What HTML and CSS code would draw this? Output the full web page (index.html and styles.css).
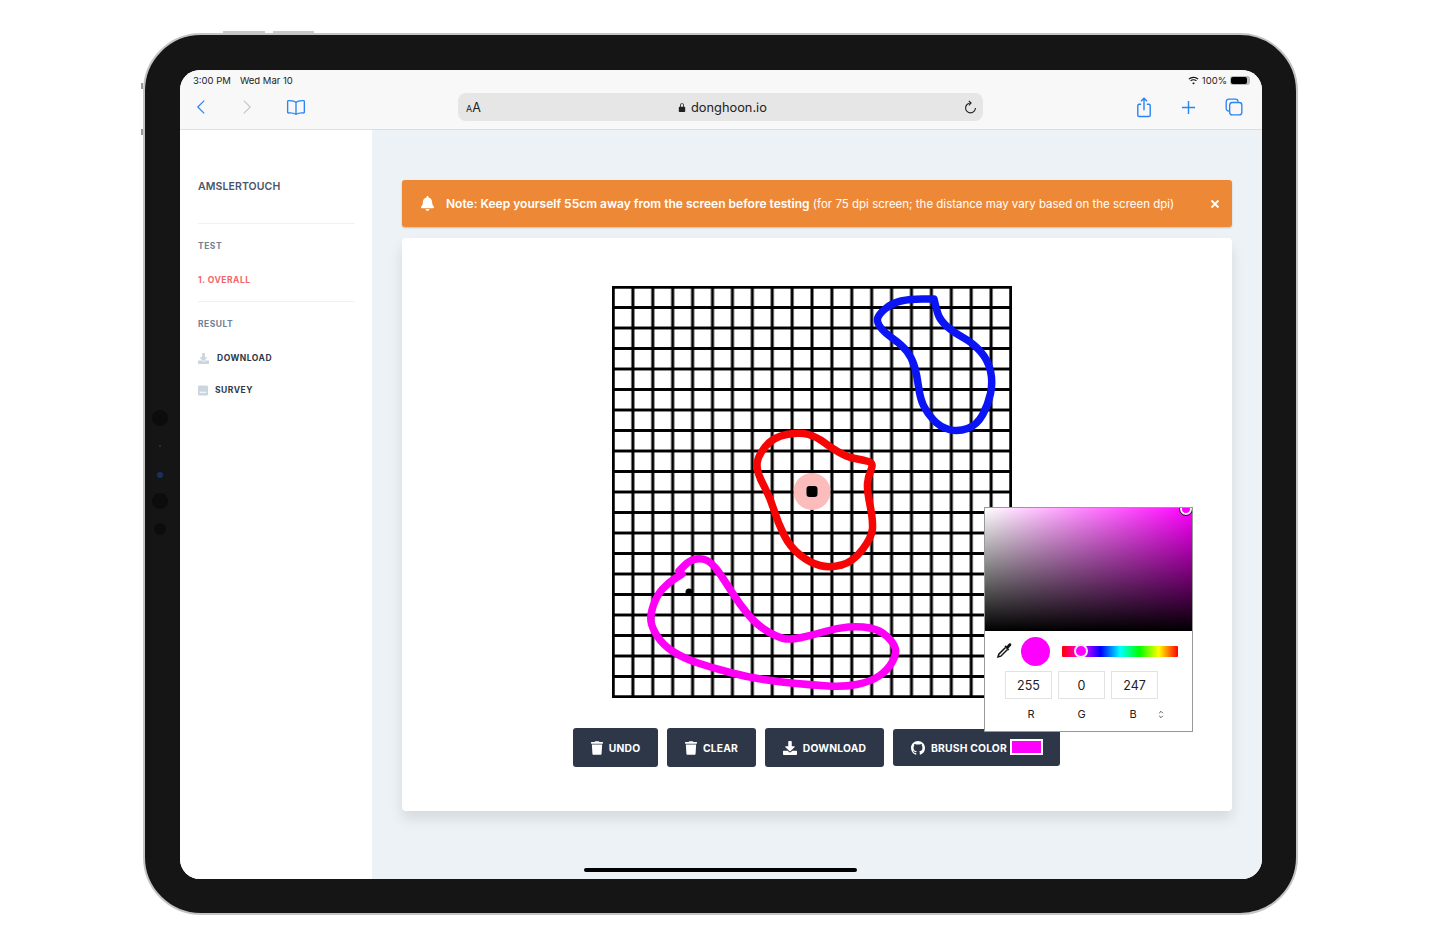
FILE: index.html
```html
<!DOCTYPE html>
<html lang="en">
<head>
    <meta charset="UTF-8">
    <meta name="viewport" content="width=device-width, initial-scale=1.0">
    <title>AmslerTouch</title>
    <link rel="stylesheet" href="styles.css">
</head>
<body>
    <div class="device">
        <span class="top-btn top-btn-a"></span>
        <span class="top-btn top-btn-b"></span>
        <span class="side-btn side-btn-a"></span>
        <span class="side-btn side-btn-b"></span>
        <div class="sensors">
            <span class="sensor"></span>
            <span class="sensor-dot"></span>
            <span class="sensor-lens"></span>
            <span class="sensor"></span>
            <span class="sensor sensor-small"></span>
        </div>

        <div class="screen">
            <header class="browser">
                <div class="status">
                    <span>3:00 PM</span>
                    <span class="status-date">Wed Mar 10</span>
                    <span class="status-right">
                        <svg class="wifi" viewBox="0 0 16 12"><path d="M8 2.2c2.4 0 4.6.9 6.2 2.5l1.1-1.2A10.6 10.6 0 0 0 8 .5C5.200.5 2.600 1.600.7 3.500l1.100 1.200A8.800 8.800 0 0 1 8 2.200zm0 3.500c1.400 0 2.700.5 3.700 1.500l1.100-1.200A7 7 0 0 0 8 4a7 7 0 0 0-4.800 2l1.100 1.200c1-1 2.300-1.500 3.700-1.500zm0 3.200c-.8 0-1.500.3-2 .8l2 2.200 2-2.200c-.5-.5-1.200-.8-2-.8z"/></svg>
                        100%
                        <span class="battery"><span class="battery-fill"></span></span>
                    </span>
                </div>
                <div class="toolbar">
                    <div class="tools tools-left">
                        <svg class="tool tool-back" viewBox="0 0 12 20"><path d="M10 2 2 10l8 8"/></svg>
                        <svg class="tool tool-forward" viewBox="0 0 12 20"><path d="m2 2 8 8-8 8"/></svg>
                        <svg class="tool tool-book" viewBox="0 0 22 18"><path d="M11 3.500C9.500 1.800 6.500 1.300 2.500 1.500 2 1.500 1.800 1.800 1.800 2.200v12c0 .5.300.8.800.8 3.500-.2 6.500.1 8.400 1.500 1.900-1.400 4.900-1.700 8.400-1.500.5 0 .8-.3.800-.8v-12c0-.4-.2-.7-.7-.7-4-.2-7 .3-8.500 2zM11 3.500v13"/></svg>
                    </div>
                    <div class="url-bar">
                        <span class="url-aa"><small>A</small>A</span>
                        <span class="url-text">
                            <svg class="lock" viewBox="0 0 10 13"><path d="M2.500 5.500V3.700a2.500 2.500 0 0 1 5 0v1.800h.6c.6 0 .9.300.9.900v4.700c0 .6-.3.900-.9.900H1.900c-.6 0-.9-.3-.9-.9V6.400c0-.6.3-.9.900-.9zm1 0h3V3.700a1.500 1.500 0 0 0-3 0z"/></svg>
                            donghoon.io
                        </span>
                        <svg class="reload" viewBox="0 0 14 16"><path d="M7 3.200a5.300 5.300 0 1 0 5.300 5.300"/><path d="M5.200.8 7.600 3.200 5.200 5.600"/></svg>
                    </div>
                    <div class="tools tools-right">
                        <svg class="tool tool-share" viewBox="0 0 16 22"><path d="M5 7.500H2.800c-.9 0-1.300.5-1.300 1.300v10.400c0 .8.400 1.300 1.300 1.300h10.400c.9 0 1.300-.5 1.300-1.300V8.800c0-.8-.4-1.300-1.300-1.300H11M8 14V1.500M4.800 4.500 8 1.300l3.200 3.200"/></svg>
                        <svg class="tool tool-plus" viewBox="0 0 16 16"><path d="M8 1v14M1 8h14"/></svg>
                        <svg class="tool tool-tabs" viewBox="0 0 20 20"><path d="M4.500 14.500c-2 0-3.200-1.200-3.200-3V4.300c0-1.800 1.200-3 3-3h7.200c1.800 0 3 1.200 3 3"/><rect x="5.200" y="5" width="13.500" height="13.700" rx="3"/></svg>
                    </div>
                </div>
            </header>

            <div class="app">
                <aside class="sidebar">
                    <h1 class="brand">AMSLERTOUCH</h1>
                    <hr class="rule">
                    <h2 class="nav-title nav-title-test">TEST</h2>
                    <a class="nav-link nav-link-active">1. OVERALL</a>
                    <hr class="rule rule-result">
                    <h2 class="nav-title nav-title-result">RESULT</h2>
                    <a class="nav-link nav-item nav-item-download">
                        <svg class="nav-icon" viewBox="0 0 512 512"><path d="M216 0h80c13.300 0 24 10.700 24 24v168h87.700c17.800 0 26.700 21.500 14.100 34.100L269.700 378.300c-7.500 7.500-19.800 7.500-27.300 0L90.100 226.100c-12.600-12.600-3.700-34.100 14.100-34.100H192V24c0-13.300 10.700-24 24-24zm296 376v112c0 13.300-10.700 24-24 24H24c-13.300 0-24-10.700-24-24V376c0-13.300 10.700-24 24-24h146.700l49 49c20.100 20.100 52.500 20.100 72.600 0l49-49H488c13.300 0 24 10.700 24 24z"/></svg>
                        DOWNLOAD
                    </a>
                    <a class="nav-link nav-item nav-item-survey">
                        <svg class="nav-icon nav-icon-survey" viewBox="0 0 11 11"><path d="M1.500 0h8C10.300 0 11 .7 11 1.500v8c0 .8-.7 1.500-1.500 1.500h-8C.7 11 0 10.300 0 9.500v-8C0 .7.700 0 1.500 0zM2 7v1h7V7z"/></svg>
                        SURVEY
                    </a>
                </aside>

                <main class="content">
                    <div class="alert">
                        <svg class="alert-bell" viewBox="0 0 448 512"><path d="M224 512c35.320 0 63.970-28.650 63.970-64H160.030c0 35.350 28.650 64 63.970 64zm215.390-149.710c-19.320-20.760-55.470-51.990-55.470-154.290 0-77.700-54.480-139.900-127.940-155.160V32c0-17.670-14.320-32-31.980-32s-31.980 14.330-31.980 32v20.840C118.560 68.100 64.080 130.300 64.080 208c0 102.300-36.150 133.530-55.470 154.290-6 6.450-8.660 14.160-8.610 21.710.11 16.400 12.980 32 32.100 32h383.800c19.120 0 32-15.600 32.100-32 .05-7.550-2.610-15.270-8.610-21.710z"/></svg>
                        <p class="alert-text"><b>Note: Keep yourself 55cm away from the screen before testing</b> (for 75 dpi screen; the distance may vary based on the screen dpi)</p>
                        <svg class="alert-close" viewBox="0 0 10 10"><path d="m1.500 1.500 7 7m0-7-7 7"/></svg>
                    </div>

                    <section class="card">
                        <svg class="canvas" viewBox="0 0 400 412">
                            <defs>
                                <pattern id="cell" x="-8.950" y="-9.250" width="19.900" height="20.500" patternUnits="userSpaceOnUse">
                                    <path class="grid-line" d="M9.950 0V20.500M0 10.250H19.900"/>
                                </pattern>
                            </defs>
                            <rect x="1" y="1" width="398" height="410" fill="url(#cell)"/>
                            <rect class="grid-line" x="1" y="1" width="398" height="410" fill="none"/>
                            <circle class="fovea" cx="200" cy="205.500" r="18.500"/>
                            <rect x="194.500" y="200" width="11" height="11" rx="3"/>
                            <circle cx="77" cy="306" r="3.500"/>
                            <path class="stroke stroke-blue" d="M322 13L310 13Q298 13 289 15Q280 17 273 23Q266 29 265.500 33Q265 37 269 42Q273 47 281.500 53Q290 59 295 65.500Q300 72 302.500 80.500Q305 89 306.500 100.500Q308 112 311.500 119.500Q315 127 321.500 134Q328 141 337 143.500Q346 146 355.500 142.500Q365 139 370.500 129Q376 119 378.500 107.500Q381 96 378.500 85Q376 74 368.500 65.500Q361 57 351 51.500Q341 46 334.500 40Q328 34 326 28Q324 22 322 13Z"/>
                            <path class="stroke stroke-red" d="M196.500 148.500Q188 146 174.500 148.500Q161 151 153 161Q145 171 145 179Q145 187 151.500 199Q158 211 162 224Q166 237 172 249Q178 261 188 269Q198 277 208 279.500Q218 282 229.500 279Q241 276 250.500 263.500Q260 251 260.500 242.500Q261 234 258 219Q255 204 255.500 197.500Q256 191 259 184Q262 177 256.500 175.500Q251 174 243 172.500Q235 171 226.500 166Q218 161 211.500 156Q205 151 196.500 148.500Z"/>
                            <path class="stroke stroke-magenta" d="M67 285L72.500 279.500Q78 274 84 273Q90 272 95 274.500Q100 277 105.500 284.500Q111 292 119.500 305.500Q128 319 136.500 329Q145 339 155 345Q165 351 171.500 352.500Q178 354 189.500 351.500Q201 349 213 345.500Q225 342 236.500 341Q248 340 258 342Q268 344 274.500 350Q281 356 283 361.500Q285 367 280.500 375.500Q276 384 267 390Q258 396 244.500 398.500Q231 401 216 400Q201 399 184.500 397.500Q168 396 151.500 393.500Q135 391 118 386.500Q101 382 86 377Q71 372 61 365.500Q51 359 45.500 350.500Q40 342 39 335.500Q38 329 41.500 319Q45 309 50.500 303Q56 297 63 292.500L70 288"/>
                        </svg>

                        <div class="actions">
                            <button class="btn btn-undo">
                                <svg class="btn-icon" viewBox="0 0 448 512"><path d="M432 32H312l-9.400-18.700A24 24 0 0 0 281.100 0H166.800a23.720 23.720 0 0 0-21.400 13.300L136 32H16A16 16 0 0 0 0 48v32a16 16 0 0 0 16 16h416a16 16 0 0 0 16-16V48a16 16 0 0 0-16-16zM53.200 467a48 48 0 0 0 47.900 45h245.800a48 48 0 0 0 47.900-45L416 128H32z"/></svg>
                                UNDO
                            </button>
                            <button class="btn btn-clear">
                                <svg class="btn-icon" viewBox="0 0 448 512"><path d="M432 32H312l-9.400-18.700A24 24 0 0 0 281.100 0H166.800a23.720 23.720 0 0 0-21.400 13.300L136 32H16A16 16 0 0 0 0 48v32a16 16 0 0 0 16 16h416a16 16 0 0 0 16-16V48a16 16 0 0 0-16-16zM53.200 467a48 48 0 0 0 47.900 45h245.800a48 48 0 0 0 47.900-45L416 128H32z"/></svg>
                                CLEAR
                            </button>
                            <button class="btn btn-download">
                                <svg class="btn-icon btn-icon-wide" viewBox="0 0 512 512"><path d="M216 0h80c13.300 0 24 10.700 24 24v168h87.700c17.800 0 26.700 21.500 14.100 34.100L269.700 378.300c-7.500 7.500-19.800 7.500-27.300 0L90.100 226.100c-12.600-12.600-3.700-34.100 14.100-34.100H192V24c0-13.300 10.700-24 24-24zm296 376v112c0 13.300-10.700 24-24 24H24c-13.300 0-24-10.700-24-24V376c0-13.300 10.700-24 24-24h146.700l49 49c20.100 20.100 52.500 20.100 72.600 0l49-49H488c13.300 0 24 10.700 24 24z"/></svg>
                                DOWNLOAD
                            </button>
                            <button class="btn btn-brush">
                                <svg class="btn-icon btn-icon-wide" viewBox="0 0 16 16"><path d="M8 0C3.580 0 0 3.580 0 8c0 3.540 2.290 6.530 5.470 7.590.4.070.55-.17.55-.38 0-.19-.01-.82-.01-1.490-2.010.37-2.530-.49-2.690-.94-.09-.23-.48-.94-.82-1.130-.28-.15-.68-.52-.01-.53.630-.01 1.080.58 1.230.82.720 1.210 1.870.87 2.330.66.070-.52.280-.87.510-1.070-1.780-.2-3.640-.89-3.640-3.950 0-.87.310-1.590.820-2.150-.08-.2-.36-1.020.080-2.120 0 0 .67-.21 2.200.82.640-.18 1.320-.27 2-.27.680 0 1.360.09 2 .27 1.530-1.040 2.200-.82 2.200-.82.440 1.100.160 1.920.080 2.120.510.560.820 1.270.820 2.150 0 3.070-1.870 3.750-3.650 3.950.290.250.540.730.540 1.480 0 1.070-.01 1.930-.01 2.200 0 .210.150.460.550.380A8.013 8.013 0 0 0 16 8c0-4.420-3.580-8-8-8z"/></svg>
                                BRUSH COLOR
                                <span class="swatch"></span>
                            </button>
                        </div>

                        <div class="picker">
                            <div class="picker-sat"><span class="picker-sat-thumb"></span></div>
                            <div class="picker-row">
                                <svg class="dropper" viewBox="0 0 16 16"><path class="dropper-body" d="M9.500 4.500 2.800 11.200 2 14l2.800-.8 6.700-6.700"/><path d="M8.500 3.500 9.700 2.300l1 1L12.500.9c.8-.8 1.800-.8 2.400-.2s.6 1.600-.2 2.400L12.300 5.400l1 1-1.200 1.200z"/></svg>
                                <span class="picker-preview"></span>
                                <div class="picker-hue"><span class="picker-hue-thumb"></span></div>
                            </div>
                            <div class="picker-fields">
                                <span class="picker-input">255</span>
                                <span class="picker-input">0</span>
                                <span class="picker-input">247</span>
                            </div>
                            <div class="picker-labels">
                                <span class="picker-label-r">R</span>
                                <span>G</span>
                                <span class="picker-label-b">B</span>
                                <svg class="picker-switch" viewBox="0 0 6 10"><path d="M1 3.500 3 1.500l2 2M1 6.500l2 2 2-2"/></svg>
                            </div>
                        </div>
                    </section>
                </main>
            </div>

            <span class="home-bar"></span>
        </div>
    </div>
</body>
</html>
```

FILE: styles.css
```css
* {
    box-sizing: border-box;
}

body {
    margin: 0;
    background: #fff;
    font-family: Inter, "Liberation Sans", sans-serif;
    color: #2d3748;
    overflow: hidden;
}

/* device frame */
.device {
    position: relative;
    width: 1155px;
    height: 882px;
    margin: 33px 0 0 143px;
    padding: 35px 34px 34px 35px;
    background: #151515;
    border: 2px solid #c4c4c4;
    border-radius: 58px;
}

.top-btn {
    position: absolute;
    top: -4px;
    height: 2px;
    background: #c9c9c9;
}

.top-btn-a {
    left: 78px;
    width: 42px;
}

.top-btn-b {
    left: 128px;
    width: 41px;
}

.side-btn {
    position: absolute;
    left: -4px;
    width: 2px;
    height: 6px;
    background: #999;
}

.side-btn-a {
    top: 48px;
}

.side-btn-b {
    top: 94px;
}

.sensors {
    position: absolute;
    left: 6px;
    top: 375px;
    width: 18px;
    display: flex;
    flex-direction: column;
    align-items: center;
}

.sensor {
    width: 16px;
    height: 16px;
    border-radius: 50%;
    background: #0c0c0c;
}

.sensor-small {
    width: 12px;
    height: 12px;
    margin-top: 14px;
}

.sensor-dot {
    width: 2px;
    height: 2px;
    margin-top: 19px;
    border-radius: 50%;
    background: #333;
}

.sensor-lens {
    width: 6px;
    height: 6px;
    margin: 25px 0 15px;
    border-radius: 50%;
    background: #17305f;
}

.screen {
    position: relative;
    display: flex;
    flex-direction: column;
    height: 809px;
    background: #fff;
    border-radius: 20px;
    overflow: hidden;
}

/* safari bar */
.browser {
    height: 60px;
    flex: none;
    background: #f8f8f8;
    border-bottom: 1px solid #dedede;
}

.status {
    display: flex;
    align-items: center;
    height: 20px;
    padding: 0 12px 0 13px;
    font-size: 9.500px;
    color: #222;
}

.status-date {
    margin-left: 9px;
}

.status-right {
    display: flex;
    align-items: center;
    gap: 3px;
    margin-left: auto;
}

.wifi {
    width: 11px;
    height: 9px;
    fill: #111;
}

.battery {
    display: block;
    width: 20px;
    height: 9px;
    padding: 1px;
    border-radius: 3px;
    background: #bbb;
}

.battery-fill {
    display: block;
    width: 16px;
    height: 7px;
    border-radius: 2px;
    background: #000;
}

.toolbar {
    display: flex;
    align-items: center;
    height: 34px;
}

.tools {
    display: flex;
    align-items: center;
}

.tools-left {
    width: 278px;
    padding-left: 16px;
}

.tools-right {
    margin-left: 153px;
}

.tool {
    display: block;
    fill: none;
    stroke: #2a84f4;
    stroke-width: 1.500;
}

.tool-back {
    width: 10px;
    height: 16px;
}

.tool-forward {
    width: 10px;
    height: 16px;
    margin-left: 36px;
    stroke: #c6c6c6;
}

.tool-book {
    width: 20px;
    height: 17px;
    margin-left: 34px;
}

.tool-share {
    width: 16px;
    height: 21px;
}

.tool-plus {
    width: 15px;
    height: 15px;
    margin-left: 29px;
}

.tool-tabs {
    width: 18px;
    height: 18px;
    margin-left: 29px;
}

.url-bar {
    display: flex;
    align-items: center;
    justify-content: space-between;
    width: 525px;
    height: 28px;
    padding: 0 6px 0 8px;
    background: #e6e6e6;
    border-radius: 8px;
    color: #222;
}

.url-aa {
    font-size: 12.500px;
}

.url-aa small {
    font-size: 9px;
}

.url-text {
    display: flex;
    align-items: center;
    gap: 5px;
    font-size: 12.800px;
}

.lock {
    width: 8px;
    height: 11px;
    fill: #222;
}

.reload {
    width: 13px;
    height: 15px;
    fill: none;
    stroke: #222;
    stroke-width: 1.200;
}

/* app */
.app {
    display: flex;
    flex: 1;
    min-height: 0;
}

.sidebar {
    width: 192px;
    flex: none;
    padding: 50px 18px 0;
    background: #fff;
}

.brand {
    margin: 0;
    font-size: 10.500px;
    line-height: 13px;
    font-weight: 600;
    letter-spacing: .1px;
    color: #4a5568;
}

.rule {
    width: 157px;
    margin: 30px 0 0;
    border: 0;
    border-top: 1px solid #edf2f7;
}

.rule-result {
    margin-top: 15px;
}

.nav-title {
    margin: 0;
    font-size: 8.500px;
    line-height: 11px;
    font-weight: 700;
    letter-spacing: .5px;
    color: #718096;
}

.nav-title-test {
    margin-top: 17px;
}

.nav-title-result {
    margin-top: 17px;
}

.nav-link {
    display: flex;
    align-items: center;
    font-size: 8.500px;
    line-height: 11px;
    font-weight: 700;
    letter-spacing: .5px;
    color: #2d3748;
}

.nav-link-active {
    margin-top: 23px;
    color: #f56565;
}

.nav-item-download {
    margin-top: 23px;
    gap: 8px;
}

.nav-item-survey {
    margin-top: 21px;
    gap: 7px;
}

.nav-icon {
    width: 11px;
    height: 11px;
    fill: #cbd5e0;
}

.nav-icon-survey {
    width: 10px;
    height: 11px;
}

.content {
    flex: 1;
    min-width: 0;
    padding: 50px 30px 0;
    background: #edf2f7;
}

.alert {
    display: flex;
    align-items: center;
    height: 47px;
    padding: 0 12px 0 19px;
    background: #ed8936;
    border-radius: 3px;
    color: #fff;
    box-shadow: 0 1px 2px rgba(0, 0, 0, .2);
}

.alert-bell {
    width: 13px;
    height: 15px;
    fill: #fff;
    flex: none;
}

.alert-text {
    margin: 0 0 0 12px;
    font-size: 11.500px;
    white-space: nowrap;
}

.alert-text b {
    font-size: 12.030px;
    font-weight: 600;
}

.alert-close {
    width: 10px;
    height: 10px;
    margin-left: auto;
    fill: none;
    stroke: #fff;
    stroke-width: 1.800;
}

.card {
    position: relative;
    display: flex;
    flex-direction: column;
    align-items: center;
    height: 573px;
    margin-top: 11px;
    padding-top: 48px;
    background: #fff;
    border-radius: 4px;
    box-shadow: 0 8px 14px rgba(0, 0, 0, .1);
}

/* grid and the drawn regions */
.canvas {
    display: block;
    width: 400px;
    height: 412px;
    margin-right: 10px;
}

.grid-line {
    fill: none;
    stroke: #000;
    stroke-width: 3;
}

.fovea {
    fill: #fcbcbc;
}

.stroke {
    fill: none;
    stroke-width: 7.500;
    stroke-linejoin: round;
    stroke-linecap: round;
}

.stroke-blue {
    stroke: #0a14f5;
}

.stroke-red {
    stroke: #f60505;
}

.stroke-magenta {
    stroke: #ff00f7;
}

.actions {
    display: flex;
    align-items: center;
    gap: 9px;
    margin: 30px 1px 0 0;
}

.btn {
    display: flex;
    align-items: center;
    justify-content: center;
    height: 39px;
    padding: 0;
    background: #2d3748;
    border: 0;
    border-radius: 3px;
    color: #fff;
    font-family: inherit;
    font-size: 10.300px;
    font-weight: 700;
    letter-spacing: .2px;
}

.btn-undo {
    width: 85px;
    gap: 6px;
}

.btn-clear {
    width: 89px;
    gap: 6px;
}

.btn-download {
    width: 119px;
    gap: 6px;
}

.btn-brush {
    width: 167px;
    height: 37px;
    gap: 6px;
    justify-content: flex-start;
    padding-left: 18px;
}

.btn-icon {
    width: 12px;
    height: 14px;
    fill: #fff;
}

.btn-icon-wide {
    width: 14px;
    height: 14px;
}

.swatch {
    width: 33px;
    height: 16px;
    margin: 0 0 2px -3px;
    background: #f0f;
    border: 2px solid #fff;
}

/* colour picker */
.picker {
    position: absolute;
    left: 582px;
    top: 269px;
    width: 209px;
    height: 225px;
    background: #fff;
    border: 1px solid #999;
}

.picker-sat {
    position: relative;
    height: 123px;
    background: linear-gradient(to top, #000, transparent), linear-gradient(to right, #fff, #f0f);
    overflow: hidden;
}

.picker-sat-thumb {
    position: absolute;
    right: 0;
    top: -5px;
    width: 12px;
    height: 12px;
    border: 2px solid #fff;
    outline: 1px solid #222;
    border-radius: 50%;
    background: #f0f;
}

.picker-row {
    display: flex;
    align-items: center;
    height: 40px;
    padding-left: 11px;
}

.dropper {
    width: 16px;
    height: 16px;
    fill: #111;
}

.dropper-body {
    fill: #fff;
    stroke: #111;
    stroke-width: 1.500;
}

.picker-preview {
    width: 29px;
    height: 29px;
    margin-left: 9px;
    border-radius: 50%;
    background: #f0f;
}

.picker-hue {
    position: relative;
    width: 116px;
    height: 11px;
    margin-left: 12px;
    border-radius: 1px;
    background: linear-gradient(90deg, #f00, #f0f, #00f, #0ff, #0f0, #ff0, #f00);
}

.picker-hue-thumb {
    position: absolute;
    left: 12px;
    top: -2px;
    width: 14px;
    height: 14px;
    border: 2px solid #eee;
    border-radius: 50%;
    background: #f0f;
}

.picker-fields {
    display: flex;
    gap: 6px;
    padding-left: 20px;
}

.picker-input {
    display: flex;
    align-items: center;
    justify-content: center;
    width: 47px;
    height: 28px;
    border: 1px solid #e2e2e2;
    font-size: 12.500px;
    color: #222;
}

.picker-labels {
    display: flex;
    align-items: center;
    height: 14px;
    margin-top: 8px;
    padding-left: 20px;
    gap: 6px;
    font-size: 11px;
    color: #222;
}

.picker-labels span {
    width: 47px;
    text-align: center;
}

.picker-labels .picker-label-r {
    padding-left: 5px;
}

.picker-labels .picker-label-b {
    padding-right: 3px;
}

.picker-switch {
    width: 6px;
    height: 9px;
    margin-left: -6px;
    fill: none;
    stroke: #444;
}

.home-bar {
    position: absolute;
    left: 404px;
    bottom: 7px;
    width: 273px;
    height: 4px;
    border-radius: 2px;
    background: #000;
}
```
